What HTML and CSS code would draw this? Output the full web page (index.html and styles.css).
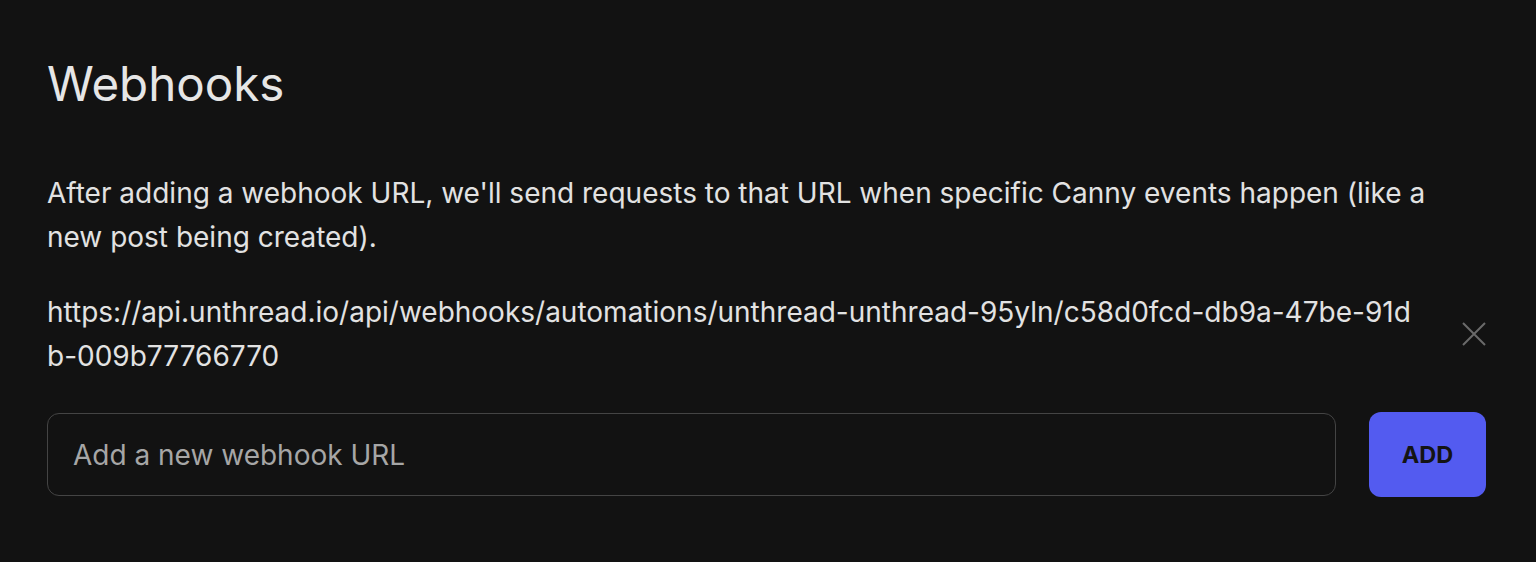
FILE: index.html
```html
<!DOCTYPE html>
<html lang="en">
<head>
<meta charset="utf-8">
<title>Webhooks</title>
<link rel="stylesheet" href="styles.css">
</head>
<body>
<main class="page">
  <h1 class="title">Webhooks</h1>
  <p class="desc">After adding a webhook URL, we'll send requests to that URL when specific Canny events happen (like a new post being created).</p>
  <div class="hook-row">
    <div class="hook-url">https://api.unthread.io/api/webhooks/automations/unthread-unthread-95yln/c58d0fcd-db9a-47be-91db-009b77766770</div>
    <button class="remove" aria-label="Remove webhook">
      <svg width="24" height="24" viewBox="0 0 24 24" fill="none" stroke="#6a6a6a" stroke-width="2">
        <path d="M1 1 L23 23 M23 1 L1 23"/>
      </svg>
    </button>
  </div>
  <form class="add-row">
    <input class="url-input" type="text" placeholder="Add a new webhook URL">
    <button class="add-btn" type="button">ADD</button>
  </form>
</main>
</body>
</html>
```
FILE: styles.css
```css
html, body {
  margin: 0;
  padding: 0;
  background: #121212;
}
body {
  font-family: Inter, "Noto Sans", sans-serif;
  color: #e2e2e2;
}
.page {
  width: 1439px;
  padding: 55px 0 0 47px;
}
.title {
  margin: 0;
  font-size: 47.5px;
  line-height: 58px;
  font-weight: 400;
  color: #e6e6e6;
}
.desc {
  margin: 58px 0 0;
  font-size: 28px;
  line-height: 44px;
}
.hook-row {
  margin-top: 31px;
  display: flex;
  align-items: center;
}
.hook-url {
  flex: 1;
  font-size: 28px;
  line-height: 44px;
  word-break: break-all;
  padding-right: 39px;
}
.remove {
  background: none;
  border: 0;
  padding: 0;
  width: 24px;
  height: 24px;
  display: flex;
  cursor: pointer;
}
.add-row {
  margin: 34px 0 0;
  display: flex;
  align-items: center;
  gap: 33px;
}
.url-input {
  flex: 1;
  box-sizing: border-box;
  height: 83px;
  background: transparent;
  border: 1.5px solid #444444;
  border-radius: 12px;
  padding: 0 25px;
  font-family: Inter, "Noto Sans", sans-serif;
  font-size: 28px;
  color: #e2e2e2;
  outline: none;
}
.url-input::placeholder {
  color: #a6a6a6;
}
.add-btn {
  width: 117px;
  height: 85px;
  border: 0;
  border-radius: 12px;
  background: #535bf0;
  color: #141414;
  font-family: Inter, "Noto Sans", sans-serif;
  font-size: 23.5px;
  font-weight: 700;
  cursor: pointer;
}
```
